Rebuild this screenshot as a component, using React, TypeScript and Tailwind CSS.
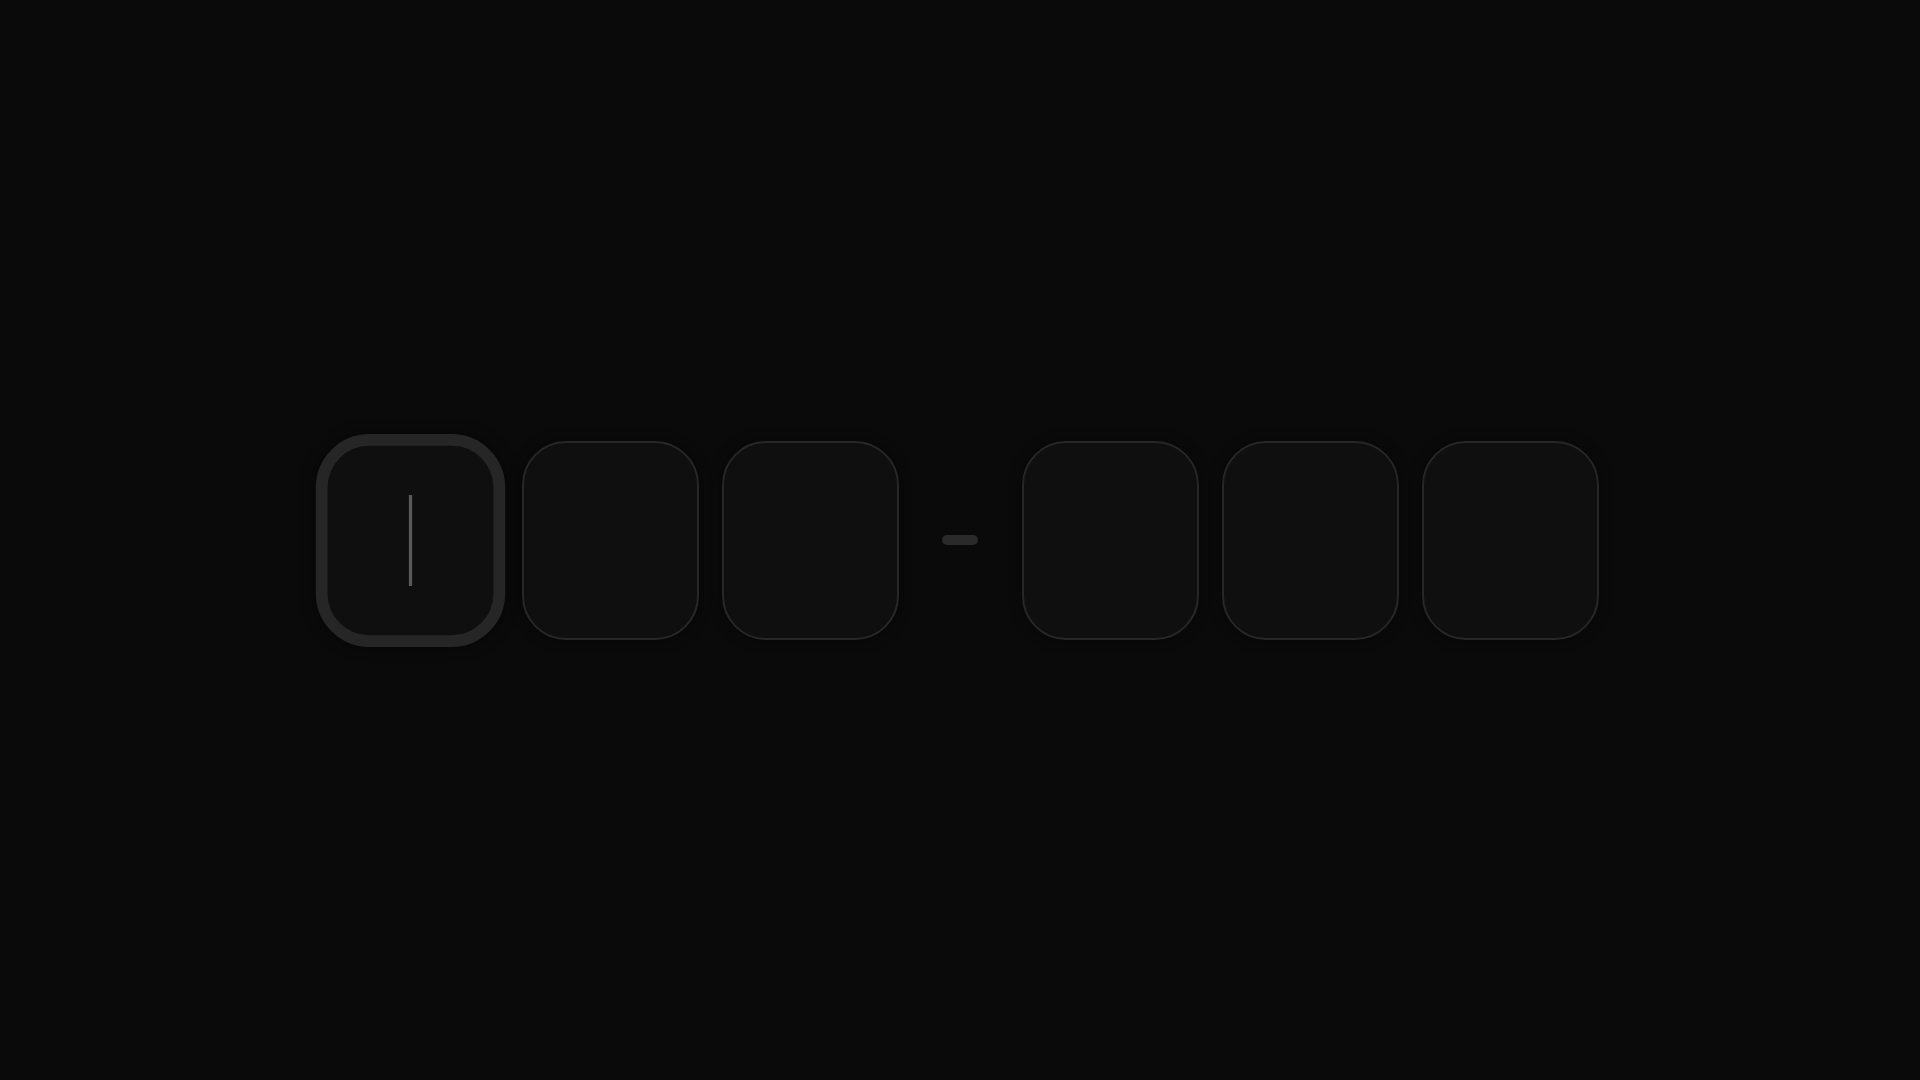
import React from 'react';

const SLOTS = [0, 1, 2, 3, 4, 5];
const ACTIVE = 0;

function Slot({ active }: { active: boolean }) {
  if (active) {
    return (
      <div className="w-[177px] h-[199px] shrink-0 scale-[1.07] rounded-[50px] border-[11px] border-[#262626] bg-[#0f0f0f] flex items-center justify-center shadow-[0_0_12px_rgba(0,0,0,0.5)]">
        <div className="w-[3.5px] h-[85px] bg-[#5a5a5a]" />
      </div>
    );
  }
  return (
    <div className="w-[177px] h-[199px] shrink-0 rounded-[44px] border-2 border-[#272727] bg-[#0f0f0f] shadow-[0_0_12px_rgba(0,0,0,0.5)]" />
  );
}

export default function App() {
  return (
    <div className="min-h-screen w-full bg-[#0a0a0a] flex items-center justify-center">
      <div className="flex items-center gap-[23px]">
        {SLOTS.slice(0, 3).map((i) => (
          <Slot key={i} active={i === ACTIVE} />
        ))}
        {/* separator */}
        <div className="w-[77px] flex items-center justify-center">
          <div className="w-9 h-2.5 rounded-full bg-[#2a2a2a]" />
        </div>
        {SLOTS.slice(3).map((i) => (
          <Slot key={i} active={i === ACTIVE} />
        ))}
      </div>
    </div>
  );
}
